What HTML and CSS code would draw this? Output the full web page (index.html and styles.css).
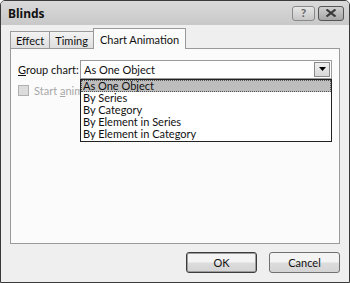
FILE: index.html
```html
<!DOCTYPE html>
<html>
<head>
<meta charset="utf-8">
<link rel="stylesheet" href="styles.css">
</head>
<body>
<div class="window">
  <div class="titlebar">
    <span class="title">Blinds</span>
    <div class="tbtns">
      <span class="tbtn help">?</span>
      <span class="tbtn close"><svg width="12" height="8" viewBox="0 0 12 8"><path d="M1.5 0.5 L10.5 7.5 M10.5 0.5 L1.5 7.5" stroke="#3a3a3a" stroke-width="2.2"/></svg></span>
    </div>
  </div>
  <div class="body">
    <div class="tabs">
      <span class="tab">Effect</span>
      <span class="tab">Timing</span>
      <span class="tab active">Chart Animation</span>
    </div>
    <div class="panel">
      <div class="row">
        <span class="label"><u>G</u>roup chart:</span>
        <div class="combo">
          <span class="value">As One Object</span>
          <span class="arrow"><svg width="7" height="4" viewBox="0 0 7 4"><path d="M0 0 H7 L3.5 4 Z" fill="#000"/></svg></span>
          <div class="list">
            <div class="item sel">As One Object</div>
            <div class="item">By Series</div>
            <div class="item">By Category</div>
            <div class="item">By Element in Series</div>
            <div class="item">By Element in Category</div>
          </div>
        </div>
      </div>
      <div class="check"><span class="box"></span><span class="ctext">Start <u>a</u>nim</span></div>
    </div>
    <div class="buttons">
      <span class="btn ok">OK</span>
      <span class="btn">Cancel</span>
    </div>
  </div>
</div>
</body>
</html>
```
FILE: styles.css
```css
html, body { margin: 0; padding: 0; }
body { width: 350px; height: 283px; overflow: hidden; background: #fff; font-family: Lato, "Noto Sans", sans-serif; font-size: 11px; color: #111; }
.window { box-sizing: border-box; width: 350px; height: 283px; border: 1px solid #3a3a3a; border-radius: 5px 5px 0 0; background: #e9e9e9; display: flex; flex-direction: column; }
.titlebar { height: 24px; display: flex; align-items: center; justify-content: space-between; padding: 0 5px 0 7px; background: linear-gradient(#dadada, #c8c8c8); border-radius: 4px 4px 0 0; }
.title { font-family: "Noto Sans", Lato, sans-serif; font-weight: bold; font-size: 12px; color: #111; }
.tbtns { display: flex; gap: 3px; align-items: center; }
.tbtn { box-sizing: border-box; width: 23px; height: 15px; border: 1px solid #8a8a8a; border-radius: 3px; display: flex; align-items: center; justify-content: center; background: linear-gradient(#e6e6e6, #c6c6c6); font-size: 12px; font-weight: bold; color: #666; line-height: 1; }
.tbtn.close { background: linear-gradient(#cfcfcf, #a6a6a6); border-color: #555; width: 26px; }
.body { flex: 1; display: flex; flex-direction: column; padding: 3px 9px 0 9px; background: #efefef; }
.tabs { display: flex; align-items: flex-end; height: 20px; position: relative; z-index: 1; }
.tab { box-sizing: border-box; height: 17px; padding: 0 5px; border: 1px solid #9a9a9a; border-bottom: none; background: linear-gradient(#f3f3f3, #dedede); display: flex; align-items: center; margin-right: -1px; }
.tab.active { height: 21px; background: #fbfbfb; padding: 0 6px; margin-bottom: -1px; }
.panel { box-sizing: border-box; height: 196px; border: 1px solid #9a9a9a; background: #fbfbfb; padding: 11px 7px 0 7px; }
.row { display: flex; align-items: center; height: 18px; }
.label { width: 62px; white-space: nowrap; }
.combo { position: relative; box-sizing: border-box; width: 252px; height: 19px; border: 1px solid #9a9a9a; background: #fff; display: flex; align-items: center; padding-left: 3px; }
.value { flex: 1; }
.arrow { box-sizing: border-box; width: 16px; height: 15px; margin-right: 1px; border: 1px solid #8a8a8a; background: linear-gradient(#f0f0f0, #d8d8d8); display: flex; align-items: center; justify-content: center; }
.list { position: absolute; left: -1px; top: 18px; width: 252px; box-sizing: border-box; border: 1px solid #222; background: #fff; padding: 0 0 1px 0; }
.item { height: 12px; line-height: 12px; padding-left: 2px; }
.item.sel { background: #bdbdbd; outline: 1px dotted #555; outline-offset: -1px; }
.check { display: flex; align-items: center; margin-top: 6px; color: #a8a8a8; }
.box { box-sizing: border-box; width: 11px; height: 11px; border: 1px solid #b0b0b0; background: #dcdcdc; margin-right: 5px; }
.buttons { display: flex; justify-content: flex-end; gap: 12px; padding: 8px 0 0 0; }
.btn { box-sizing: border-box; width: 71px; height: 21px; border: 1px solid #707070; border-radius: 3px; background: linear-gradient(#f4f4f4 45%, #dcdcdc 55%, #d4d4d4); display: flex; align-items: center; justify-content: center; }
.btn.ok { border-color: #3c3c3c; box-shadow: inset 0 0 0 1px #9d9d9d; }
```
